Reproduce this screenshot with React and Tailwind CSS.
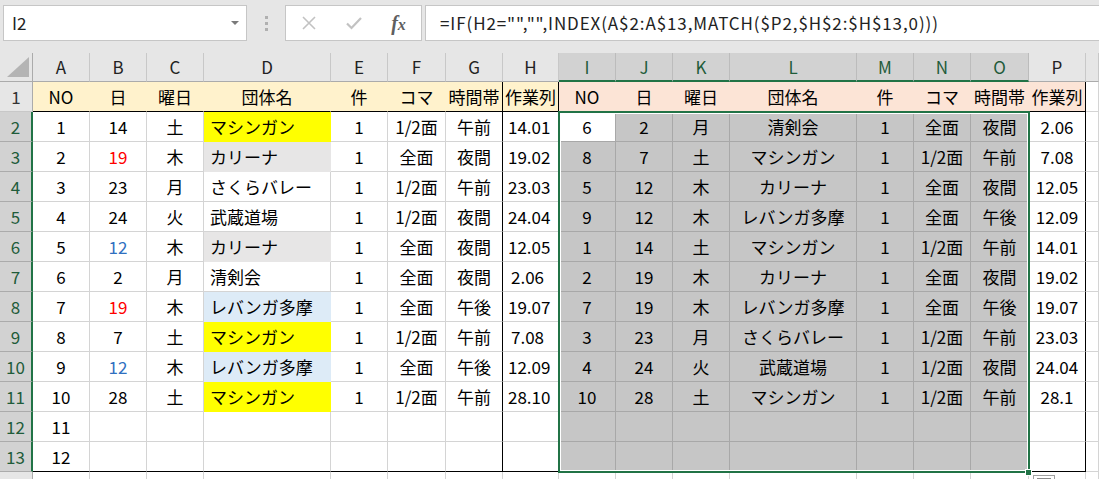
import React from "react";

const font = { fontFamily: '"Noto Sans CJK JP", "Noto Sans", sans-serif' };

const left = [
  ["1", "14", "土", "マシンガン", "1", "1/2面", "午前", "14.01"],
  ["2", "19", "木", "カリーナ", "1", "全面", "夜間", "19.02"],
  ["3", "23", "月", "さくらバレー", "1", "1/2面", "午前", "23.03"],
  ["4", "24", "火", "武蔵道場", "1", "1/2面", "夜間", "24.04"],
  ["5", "12", "木", "カリーナ", "1", "全面", "夜間", "12.05"],
  ["6", "2", "月", "清剣会", "1", "全面", "夜間", "2.06"],
  ["7", "19", "木", "レバンガ多摩", "1", "全面", "午後", "19.07"],
  ["8", "7", "土", "マシンガン", "1", "1/2面", "午前", "7.08"],
  ["9", "12", "木", "レバンガ多摩", "1", "全面", "午後", "12.09"],
  ["10", "28", "土", "マシンガン", "1", "1/2面", "午前", "28.10"],
  ["11", "", "", "", "", "", "", ""],
  ["12", "", "", "", "", "", "", ""],
];

const right = [
  ["6", "2", "月", "清剣会", "1", "全面", "夜間", "2.06"],
  ["8", "7", "土", "マシンガン", "1", "1/2面", "午前", "7.08"],
  ["5", "12", "木", "カリーナ", "1", "全面", "夜間", "12.05"],
  ["9", "12", "木", "レバンガ多摩", "1", "全面", "午後", "12.09"],
  ["1", "14", "土", "マシンガン", "1", "1/2面", "午前", "14.01"],
  ["2", "19", "木", "カリーナ", "1", "全面", "夜間", "19.02"],
  ["7", "19", "木", "レバンガ多摩", "1", "全面", "午後", "19.07"],
  ["3", "23", "月", "さくらバレー", "1", "1/2面", "午前", "23.03"],
  ["4", "24", "火", "武蔵道場", "1", "1/2面", "夜間", "24.04"],
  ["10", "28", "土", "マシンガン", "1", "1/2面", "午前", "28.1"],
  ["", "", "", "", "", "", "", ""],
  ["", "", "", "", "", "", "", ""],
];

const headers = ["NO", "日", "曜日", "団体名", "件", "コマ", "時間帯", "作業列"];
const letters = ["A", "B", "C", "D", "E", "F", "G", "H", "I", "J", "K", "L", "M", "N", "O", "P", ""];

// fill for column D of the left table, per sheet row
const dFill = { 2: "yellow", 3: "gray", 6: "gray", 8: "blue", 9: "yellow", 10: "blue", 11: "yellow" };

function dayColor(r) {
  if (r === 3 || r === 8) return "text-[#ff0000]";
  if (r === 6 || r === 10) return "text-[#2f6fbf]";
  return "text-black";
}

function cellClasses(r, c) {
  // r: 1..14, c: 1..17 (17 = blank column after P)
  const inSel = r >= 2 && r <= 13 && c >= 9 && c <= 15;
  let bg = "bg-white";
  let rc = "border-r-[#d4d4d4]";
  let bc = "border-b-[#d4d4d4]";

  if (r === 1 && c <= 8) {
    bg = "bg-[#fff2cc]";
    rc = "border-r-[#fff2cc]";
  } else if (r === 1 && c <= 16) {
    bg = "bg-[#fce4d6]";
    rc = "border-r-[#fce4d6]";
  } else if (c === 4 && dFill[r] === "yellow") {
    bg = "bg-[#ffff00]";
    rc = "border-r-[#ffff00]";
    bc = "border-b-[#ffff00]";
  } else if (c === 4 && dFill[r] === "gray") {
    bg = "bg-[#e7e6e6]";
    rc = "border-r-[#e7e6e6]";
    bc = "border-b-[#e7e6e6]";
  } else if (c === 4 && dFill[r] === "blue") {
    bg = "bg-[#ddebf7]";
    rc = "border-r-[#ddebf7]";
    bc = "border-b-[#ddebf7]";
  } else if (inSel) {
    bg = r === 2 && c === 9 ? "bg-white" : "bg-[#c6c6c6]";
    rc = "border-r-[#a8a8a8]";
    bc = "border-b-[#a8a8a8]";
  }

  if (r <= 13 && (c === 7 || c === 8 || c === 16)) rc = "border-r-black";
  if ((r === 1 || r === 13) && c <= 16) bc = "border-b-black";

  return `${bg} ${rc} ${bc}`;
}

function alignFor(r, c) {
  if (r === 1 || c >= 9) return "justify-center";
  if (c === 4) return "justify-start pl-[6px]";
  if (c === 8) return "justify-start pl-[5px]";
  return "justify-center";
}

function Row({ r }) {
  const sel = r >= 2 && r <= 13;
  let vals = [];
  if (r === 1) vals = [...headers, ...headers];
  else if (r <= 13) vals = [...left[r - 2], ...right[r - 2]];
  else vals = new Array(16).fill("");
  vals = [...vals, ""];

  return (
    <>
      <div
        className={
          sel
            ? "flex items-center justify-center bg-[#d2d2d2] text-[#1f5c3a] border-r-2 border-b border-r-[#217346] border-b-[#ababab]"
            : "flex items-center justify-center bg-[#e6e6e6] text-[#333] border-r border-b border-r-[#ababab] border-b-[#c8c8c8]"
        }
      >
        {r <= 13 ? r : ""}
      </div>
      {vals.map((v, i) => {
        const c = i + 1;
        const pad = r > 1 && c === 8 && (v === "2.06" || v === "7.08") ? "pl-[8px]" : "";
        return (
          <div
            key={c}
            className={`flex items-center whitespace-nowrap border-r border-b ${cellClasses(r, c)} ${alignFor(
              r,
              c
            )} ${pad} ${c === 2 && r > 1 ? dayColor(r) : "text-black"}`}
          >
            {v}
          </div>
        );
      })}
    </>
  );
}

function TopBar() {
  return (
    <div className="h-[53px] bg-[#e6e6e6] flex items-start pt-[5px] pl-[3px]">
      <div className="w-[244px] h-[36px] bg-white border border-[#c6c6c6] flex items-center pl-[8px] pr-[6px] text-[17px] text-[#222]">
        <span className="flex-1">I2</span>
        <svg width="10" height="6" viewBox="0 0 10 6">
          <path d="M1 1h8L5 5z" fill="#7a7a7a" />
        </svg>
      </div>
      <div className="w-[38px] h-[36px] flex flex-col items-center justify-center gap-[3px]">
        <span className="block w-[3px] h-[3px] bg-[#b0b0b0]" />
        <span className="block w-[3px] h-[3px] bg-[#b0b0b0]" />
        <span className="block w-[3px] h-[3px] bg-[#b0b0b0]" />
      </div>
      <div className="w-[137px] h-[36px] bg-white border border-[#c6c6c6] flex items-center">
        <div className="w-[45px] flex justify-center">
          <svg width="16" height="16" viewBox="0 0 16 16">
            <path d="M2 2L14 14M14 2L2 14" stroke="#c2c2c2" strokeWidth="1.6" fill="none" />
          </svg>
        </div>
        <div className="w-[45px] flex justify-center">
          <svg width="18" height="16" viewBox="0 0 18 16">
            <path d="M2 8.5L6.5 13L16 3" stroke="#c2c2c2" strokeWidth="2.2" fill="none" />
          </svg>
        </div>
        <div
          className="w-[45px] flex justify-center text-[#5f5f5f] text-[20px] italic font-bold"
          style={{ fontFamily: '"Liberation Serif", serif' }}
        >
          <span>
            f<span className="text-[16px]">x</span>
          </span>
        </div>
      </div>
      <div className="ml-[3px] flex-1 h-[36px] bg-white border border-[#c6c6c6] border-r-0 flex items-center pl-[14px] text-[17px] tracking-[0.9px] text-[#222] whitespace-nowrap">
        =IF(H2="","",INDEX(A$2:A$13,MATCH($P2,$H$2:$H$13,0)))
      </div>
    </div>
  );
}

export default function App() {
  return (
    <div className="relative w-[1099px] h-[479px] overflow-hidden bg-white text-[17px]" style={font}>
      <TopBar />
      <div className="grid grid-cols-[33px_57px_57px_57px_127px_57px_58px_57px_56px_57px_57px_57px_127px_57px_57px_58px_57px_13px] grid-rows-[29px_repeat(14,30px)]">
        <div className="bg-[#e6e6e6] border-r border-b border-r-[#ababab] border-b-[#ababab] flex items-end justify-end pr-[3px] pb-[4px]">
          <svg width="22" height="20" viewBox="0 0 22 20">
            <path d="M22 0V20H0z" fill="#b4b4b4" />
          </svg>
        </div>
        {letters.map((l, i) => {
          const sel = i >= 8 && i <= 14;
          return (
            <div
              key={i}
              className={
                sel
                  ? "flex items-center justify-center bg-[#d2d2d2] text-[#1f5c3a] border-r border-b-2 border-r-[#bcbcbc] border-b-[#217346]"
                  : "flex items-center justify-center bg-[#e6e6e6] text-[#222] border-r border-b border-r-[#c8c8c8] border-b-[#ababab]"
              }
            >
              {l}
            </div>
          );
        })}
        {Array.from({ length: 14 }, (_, i) => (
          <Row key={i} r={i + 1} />
        ))}
      </div>

      {/* selection outline I2:O13 */}
      <div className="absolute left-[558px] top-[111px] w-[472px] h-[362px] border-2 border-[#217346] shadow-[inset_0_0_0_1px_white] pointer-events-none" />
      {/* fill handle */}
      <div className="absolute left-[1025px] top-[469px] w-[7px] h-[7px] bg-[#217346] border border-white" />
      {/* quick analysis button, cut off */}
      <div className="absolute left-[1033px] top-[475px] w-[22px] h-[10px] bg-white border border-[#a0a0a0]">
        <div className="mt-[2px] ml-[3px] w-[14px] h-[2px] bg-[#8a8a8a]" />
      </div>
    </div>
  );
}
